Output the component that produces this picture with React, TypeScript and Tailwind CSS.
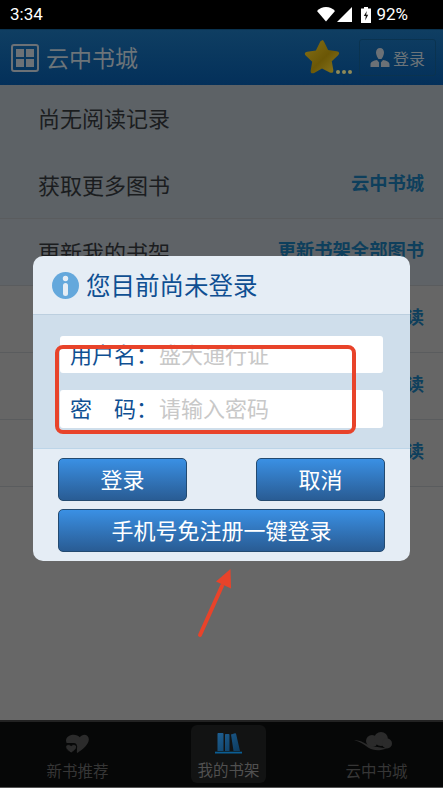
import React from "react";

const rows = [
  { left: "尚无阅读记录", right: "", border: false, bg: "bg-[#5d6266]" },
  { left: "获取更多图书", right: "云中书城", border: true, bg: "bg-[#5d6266]" },
  { left: "更新我的书架", right: "更新书架全部图书", border: true, bg: "bg-[#5f6367]" },
  { left: "", right: "阅读", border: true, bg: "bg-[#666666]" },
  { left: "", right: "阅读", border: true, bg: "bg-[#666666]" },
  { left: "", right: "阅读", border: true, bg: "bg-[#666666]" },
];

function StatusBar() {
  return (
    <div className="flex h-[29px] items-center justify-between bg-black pl-[10px] pr-[35px] font-['Roboto',sans-serif] text-[17px] text-white">
      <span>3:34</span>
      <div className="flex items-center">
        <svg width="18" height="15" viewBox="0 0 18 15">
          <path d="M0 4C2.500 1.500 5.500 0 9 0s6.500 1.500 9 4L9 14.500z" fill="#fff" />
        </svg>
        <svg className="ml-[2px]" width="15" height="15" viewBox="0 0 15 15">
          <path d="M15 0V15H0z" fill="#fff" />
        </svg>
        <svg className="ml-[9px]" width="10" height="16" viewBox="0 0 10 16">
          <path d="M3 0h4v1.500h3V16H0V1.500h3z" fill="#fff" />
          <path d="M5.800 4L2.800 9h2L4.200 13.500l3-5.800h-2z" fill="#111" />
        </svg>
        <span className="ml-[5px]">92%</span>
      </div>
    </div>
  );
}

function Header() {
  return (
    <div className="flex h-[56px] items-center border-t border-[#0a3350] bg-gradient-to-b from-[#0f3e62] to-[#04305a] pl-[11px] pr-[7px]">
      <div className="grid h-[28px] w-[28px] grid-cols-2 gap-[2px] rounded-[3px] border-[2px] border-[#6c7176] p-[3px]">
        <span className="bg-[#6c7176]" />
        <span className="bg-[#6c7176]" />
        <span className="bg-[#6c7176]" />
        <span className="bg-[#6c7176]" />
      </div>
      <span className="ml-[7px] text-[23px] text-[#6c7479]">云中书城</span>
      <div className="ml-auto flex items-end">
        <svg width="38" height="37" viewBox="0 0 38 37">
          <defs>
            <linearGradient id="star" x1="0" y1="0" x2="1" y2="1">
              <stop offset="0" stopColor="#857016" />
              <stop offset="0.55" stopColor="#6b5706" />
              <stop offset="1" stopColor="#8a7820" />
            </linearGradient>
          </defs>
          <path
            d="M19 1c1 0 1.700 .8 2.200 1.900l3.900 8.100 8.600 1.200c2.600 .4 3.200 2.300 1.400 4l-6.300 6 1.500 8.700c.4 2.500-1.300 3.700-3.500 2.500L19 29.500l-7.800 4.400c-2.200 1.200-3.900 0-3.500-2.500l1.500-8.700-6.300-6c-1.800-1.700-1.200-3.600 1.400-4l8.600-1.200 3.900-8.100c.5-1.100 1.200-1.900 2.200-1.900z"
            fill="url(#star)"
          />
        </svg>
        <div className="mb-[2px] -ml-[5px] flex gap-[2px]">
          <span className="h-[4px] w-[4px] rounded-full bg-[#8f8a58]" />
          <span className="h-[4px] w-[4px] rounded-full bg-[#8f8a58]" />
          <span className="h-[4px] w-[4px] rounded-full bg-[#8f8a58]" />
        </div>
      </div>
      <div className="ml-[7px] flex h-[37px] w-[77px] items-center justify-center gap-[3px] rounded-[3px] border border-[#0a3350]">
        <svg width="20" height="20" viewBox="0 0 20 20">
          <path d="M10 0c2.500 0 4 2 4 4.500 0 2.500-1.500 5-2.500 6.500h-3C7.500 9.500 6 7 6 4.500 6 2 7.500 0 10 0z" fill="#6c7176" />
          <path d="M0.500 19v-2.500c0-2.500 3-4 6.500-4.500L10 15.500l3-3.500c3.500 .5 6.500 2 6.500 4.500V19z" fill="#6c7176" />
          <path d="M9 14h2v5H9z" fill="#0b3a60" />
        </svg>
        <span className="text-[16px] text-[#6c7479]">登录</span>
      </div>
    </div>
  );
}

function BookRows() {
  return (
    <div className="flex flex-1 flex-col bg-[#676767]">
      {rows.map((row, i) => (
        <div
          key={i}
          className={`flex h-[67px] items-center justify-between pl-[38px] pr-[19px] ${row.bg} ${
            row.border ? "border-b border-[#5a5c5e]" : ""
          }`}
        >
          <span className="mb-[2px] text-[22px] text-[#1b1d1f]">{row.left}</span>
          <span className="mb-[4px] text-[18.3px] font-bold text-[#0e3f5c]">{row.right}</span>
        </div>
      ))}
    </div>
  );
}

function TabBar() {
  return (
    <div className="grid h-[68px] grid-cols-[155px_148px_1fr] border-t-2 border-b border-t-[#222222] border-b-[#555555] bg-[#060707]">
      <div className="flex flex-col items-center pt-[12px]">
        <svg width="25" height="20" viewBox="0 0 27 22">
          <path d="M13 21c2-1.500 13-8 13-15 0-6-7-7-10-2.500C13 -1 2 0 1 6c-.3 1.500 0 3 .5 4h8c2.500 0 4 2.500 3.500 5 0 2-.5 4.500 0 6z" fill="#2b2b2b" />
          <path d="M6.500 21C3 18.500 .5 16.500 .5 14.200c0-2.700 4-3.500 6-1.200 2-2.300 6-1.500 6 1.200 0 2.300-2.500 4.300-6 6.800z" fill="#2b2b2b" stroke="#060707" strokeWidth="1" />
        </svg>
        <span className="mt-[5px] text-[15.5px] text-[#363636]">新书推荐</span>
      </div>
      <div className="flex items-start justify-center pt-[3px]">
        <div className="-ml-[1px] flex h-[58px] w-[75px] flex-col items-center rounded-[6px] bg-[#121313] pt-[8px]">
          <svg width="27" height="21" viewBox="0 0 27 21">
            <defs>
              <linearGradient id="book" x1="0" y1="0" x2="1" y2="1">
                <stop offset="0" stopColor="#1e5f92" />
                <stop offset="1" stopColor="#0d3c60" />
              </linearGradient>
            </defs>
            <path d="M2.500 1c0-.6 .4-1 1-1h4c.6 0 1 .4 1 1v17h-6zM10 2c0-.6 .4-1 1-1h2.500c.6 0 1 .4 1 1v16H10zM16 1.500l4-1.300c.5-.1 1 .1 1.100 .7L25 18h-6.500z" fill="url(#book)" />
            <path d="M0 18.700h27V20.500H0z" fill="#0b5e94" />
          </svg>
          <span className="mt-[4px] text-[15.5px] text-[#505050]">我的书架</span>
        </div>
      </div>
      <div className="flex flex-col items-center pl-[7px] pt-[10px]">
        <svg className="-ml-[8px]" width="38" height="20" viewBox="0 0 38 20">
          <circle cx="18" cy="9" r="6" fill="#2b2b2b" />
          <circle cx="27" cy="7" r="7" fill="#2b2b2b" />
          <circle cx="33" cy="11.500" r="5" fill="#2b2b2b" />
          <path d="M0 8c7 0 11 4 17 6l16 2.500-6 1.500c-5 .5-9 0-13-2.500C10 12.500 6 9.500 0 8z" fill="#2b2b2b" />
        </svg>
        <span className="mt-[7px] text-[15.5px] text-[#363636]">云中书城</span>
      </div>
    </div>
  );
}

function LoginDialog() {
  return (
    <div className="absolute left-[33px] top-[256px] w-[377px] overflow-hidden rounded-[10px] bg-[#e5edf5]">
      <div className="flex h-[59px] items-center border-b border-[#bccfdf] pl-[19px]">
        <svg width="27" height="27" viewBox="0 0 27 27">
          <circle cx="13.500" cy="13.500" r="13.500" fill="#64a8dc" />
          <circle cx="13.500" cy="6.500" r="2.700" fill="#e5edf5" />
          <rect x="11" y="11" width="5" height="13" rx="2.500" fill="#e5edf5" />
        </svg>
        <span className="ml-[7px] text-[24.5px] text-[#0f4f92]">您目前尚未登录</span>
      </div>
      <div className="flex h-[134px] flex-col gap-[17px] border-b border-[#bdd5e8] bg-[#cfdeeb] px-[27px] pt-[21px]">
        <div className="flex h-[37px] items-center rounded-[3px] bg-white pb-[2px] pl-[10px] text-[22px]">
          <span className="w-[89px] text-[#0f4f92]">用户名：</span>
          <span className="text-[#c8c8c8]">盛大通行证</span>
        </div>
        <div className="flex h-[38px] items-center rounded-[3px] bg-white pb-[3px] pl-[10px] text-[22px]">
          <span className="w-[89px] text-[#0f4f92]">密　码：</span>
          <span className="text-[#c8c8c8]">请输入密码</span>
        </div>
      </div>
      <div className="flex flex-col gap-[8px] px-[25px] pb-[9px] pt-[9px]">
        <div className="flex justify-between">
          <DialogButton className="w-[129px]">登录</DialogButton>
          <DialogButton className="w-[129px]">取消</DialogButton>
        </div>
        <DialogButton className="w-full">手机号免注册一键登录</DialogButton>
      </div>
    </div>
  );
}

function DialogButton({ className, children }: { className: string; children: React.ReactNode }) {
  return (
    <button
      className={`flex h-[43px] items-center justify-center rounded-[5px] border border-[#234a70] bg-gradient-to-b from-[#3a90e4] to-[#295c94] pb-[3px] text-[22px] text-white ${className}`}
    >
      {children}
    </button>
  );
}

export default function App() {
  return (
    <div className="relative flex h-[788px] w-full flex-col overflow-hidden bg-[#676767] font-['Noto_Sans_CJK_SC',sans-serif]">
      <StatusBar />
      <Header />
      <BookRows />
      <TabBar />
      <LoginDialog />

      {/* red annotation over the form */}
      <div className="absolute left-[55px] top-[345px] h-[89px] w-[301px] rounded-[8px] border-[4px] border-[#e8432a]" />
      <svg className="absolute left-[190px] top-[560px]" width="50" height="85" viewBox="0 0 50 85">
        <path d="M10 75L32 26" stroke="#e8432a" strokeWidth="4" strokeLinecap="round" />
        <path d="M40.500 9L26 21.500l15 7z" fill="#e8432a" />
      </svg>
    </div>
  );
}
